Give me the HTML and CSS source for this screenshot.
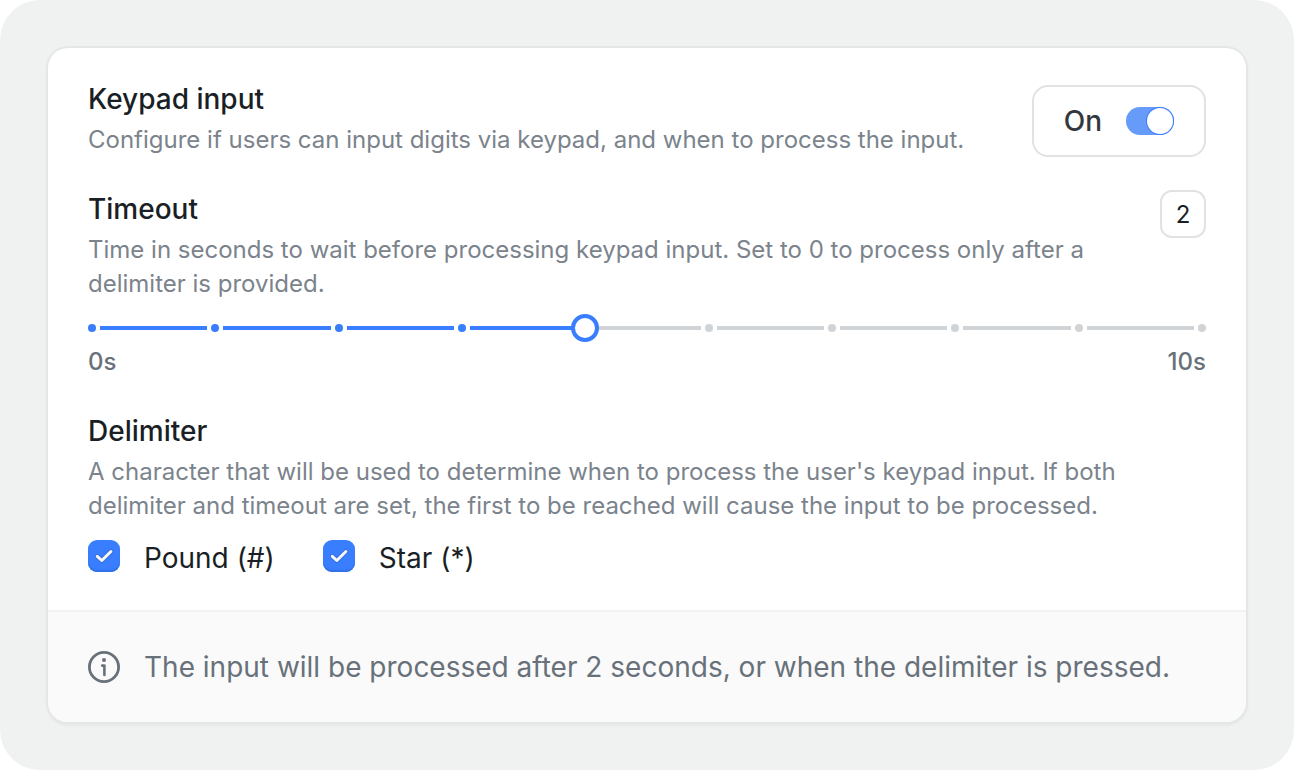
FILE: index.html
```html
<!DOCTYPE html>
<html lang="en">
<head>
<meta charset="utf-8">
<meta name="viewport" content="width=device-width, initial-scale=1">
<title>Keypad input</title>
<link rel="stylesheet" href="styles.css">
</head>
<body>
<main class="page">
  <form class="card">
    <div class="settings">
      <section class="setting setting-head">
        <div class="copy">
          <h2 class="title">Keypad input</h2>
          <p class="description">Configure if users can input digits via keypad, and when to process the input.</p>
        </div>
        <label class="toggle">
          <span class="toggle-text">On</span>
          <input class="switch" type="checkbox" role="switch" checked>
        </label>
      </section>

      <section class="timeout">
        <div class="setting">
          <div class="copy">
            <h2 class="title"><label for="timeout-value">Timeout</label></h2>
            <p class="description">Time in seconds to wait before processing keypad input. Set to 0 to process only after a delimiter is provided.</p>
          </div>
          <input class="value" id="timeout-value" type="text" inputmode="numeric" value="2">
        </div>
        <div class="slider">
          <div class="track" aria-hidden="true">
            <i class="dot on"></i><i class="bar on"></i>
            <i class="dot on"></i><i class="bar on"></i>
            <i class="dot on"></i><i class="bar on"></i>
            <i class="dot on"></i><i class="bar on"></i>
            <i class="dot"></i><i class="bar"></i>
            <i class="dot"></i><i class="bar"></i>
            <i class="dot"></i><i class="bar"></i>
            <i class="dot"></i><i class="bar"></i>
            <i class="dot"></i><i class="bar"></i>
            <i class="dot"></i>
          </div>
          <input class="range" type="range" min="0" max="9" step="1" value="4" aria-label="Timeout">
        </div>
        <div class="scale"><span>0s</span><span>10s</span></div>
      </section>

      <section class="delimiter">
        <div class="copy">
          <h2 class="title">Delimiter</h2>
          <p class="description">A character that will be used to determine when to process the user's keypad input. If both delimiter and timeout are set, the first to be reached will cause the input to be processed.</p>
        </div>
        <div class="options">
          <label class="option">
            <span class="box"><input class="check" type="checkbox" checked><svg class="tick" viewBox="0 0 32 32" aria-hidden="true"><path class="tick-edge" d="M9.300 16.300L13.800 20.500L22.900 11.500"/><path class="tick-line" d="M9.300 16.300L13.800 20.500L22.900 11.500"/></svg></span>
            <span>Pound (#)</span>
          </label>
          <label class="option">
            <span class="box"><input class="check" type="checkbox" checked><svg class="tick" viewBox="0 0 32 32" aria-hidden="true"><path class="tick-edge" d="M9.300 16.300L13.800 20.500L22.900 11.500"/><path class="tick-line" d="M9.300 16.300L13.800 20.500L22.900 11.500"/></svg></span>
            <span>Star (*)</span>
          </label>
        </div>
      </section>
    </div>

    <footer class="note">
      <svg class="info" viewBox="0 0 32 32" aria-hidden="true">
        <circle cx="16" cy="16" r="14.600" fill="none" stroke="currentColor" stroke-width="2.800"/>
        <circle cx="16" cy="9" r="2" fill="currentColor"/>
        <path d="M14.200 14.600H16.400V24" fill="none" stroke="currentColor" stroke-width="2.600" stroke-linecap="round" stroke-linejoin="round"/>
      </svg>
      <p>The input will be processed after 2 seconds, or when the delimiter is pressed.</p>
    </footer>
  </form>
</main>
</body>
</html>
```
FILE: styles.css
```css
:root {
  --blue: #387eff;
  --ink: #1a1f26;
  --slate: #68717a;
  --muted: #7b838c;
  --line: #e1e2e3;
}

* {
  box-sizing: border-box;
}

body {
  margin: 0;
  background: #fff;
  color: var(--ink);
  font-family: Inter, "Liberation Sans", sans-serif;
}

h2,
p {
  margin: 0;
}

input {
  margin: 0;
  font: inherit;
}

.page {
  min-height: 100vh;
  padding: 48px;
  border-radius: 40px;
  background: #f0f2f1;
}

.card {
  overflow: hidden;
  border-radius: 20px;
  background: #fff;
  box-shadow: 0 0 0 2px #e5e7e7, 0 2px 4px rgba(20, 30, 50, 0.1);
}

.settings {
  display: flex;
  flex-direction: column;
  gap: 33px;
  padding: 32px 40px 34px;
}

.setting {
  display: flex;
  align-items: flex-start;
  justify-content: space-between;
  gap: 40px;
}

.setting-head {
  align-items: flex-end;
}

.copy {
  display: flex;
  flex-direction: column;
  gap: 5px;
}

.title {
  font-size: 28px;
  line-height: 38px;
  font-weight: 500;
}

.description {
  color: var(--muted);
  font-size: 24px;
  line-height: 34px;
}

.toggle {
  display: flex;
  flex: none;
  align-items: center;
  gap: 24px;
  height: 72px;
  padding: 0 30px;
  border: 2px solid var(--line);
  border-radius: 16px;
  color: #33383e;
  font-size: 28px;
  font-weight: 500;
}

.switch {
  display: flex;
  justify-content: flex-end;
  width: 48px;
  height: 28px;
  padding: 1px;
  border-radius: 14px;
  background: #679bf9;
  appearance: none;
}

.switch::before {
  content: "";
  width: 26px;
  height: 26px;
  border-radius: 50%;
  background: #fff;
  box-shadow: 0 0 0 1px var(--blue);
}

.switch:not(:checked) {
  justify-content: flex-start;
  background: #d0d4d8;
}

.value {
  flex: none;
  width: 46px;
  height: 48px;
  padding: 0;
  border: 2px solid var(--line);
  border-radius: 12px;
  background: #fff;
  color: var(--ink);
  font-size: 24px;
  text-align: center;
}

.slider {
  position: relative;
  margin-top: 12px;
}

.track {
  display: flex;
  align-items: center;
  gap: 4px;
  height: 30px;
}

.dot,
.bar {
  background: #d0d4d7;
}

.dot {
  flex: none;
  width: 8px;
  height: 8px;
  border-radius: 50%;
}

.bar {
  flex: 1;
  height: 4px;
}

.on {
  background: var(--blue);
}

.range {
  position: absolute;
  inset: 0 -10px;
  width: calc(100% + 20px);
  height: 30px;
  background: transparent;
  appearance: none;
}

.range::-webkit-slider-thumb {
  width: 28px;
  height: 28px;
  border: 4px solid var(--blue);
  border-radius: 50%;
  background: #fff;
  appearance: none;
}

.scale {
  display: flex;
  justify-content: space-between;
  margin-top: 2px;
  color: var(--slate);
  font-size: 24px;
  line-height: 34px;
  font-weight: 500;
}

.options {
  display: flex;
  gap: 48px;
  margin-top: 17px;
}

.option {
  display: flex;
  align-items: flex-start;
  gap: 24px;
  font-size: 28px;
  line-height: 36px;
}

.box {
  display: grid;
}

.check,
.tick {
  grid-area: 1 / 1;
  width: 32px;
  height: 32px;
}

.check {
  border-radius: 9px;
  background: var(--blue);
  box-shadow: inset 0 -2px 1px #3372e6;
  appearance: none;
}

.tick {
  fill: none;
  stroke-linecap: round;
  stroke-linejoin: round;
  pointer-events: none;
}

.tick-edge {
  stroke: #3470df;
  stroke-width: 5;
}

.tick-line {
  stroke: #f7f7f7;
  stroke-width: 3;
}

.check:not(:checked) + .tick {
  display: none;
}

.note {
  display: flex;
  align-items: center;
  gap: 24px;
  padding: 38px 40px;
  border-top: 2px solid #f1f2f2;
  background: #fafafa;
  color: var(--slate);
  font-size: 28px;
  line-height: 34px;
}

.info {
  flex: none;
  width: 32px;
  height: 32px;
}
```
